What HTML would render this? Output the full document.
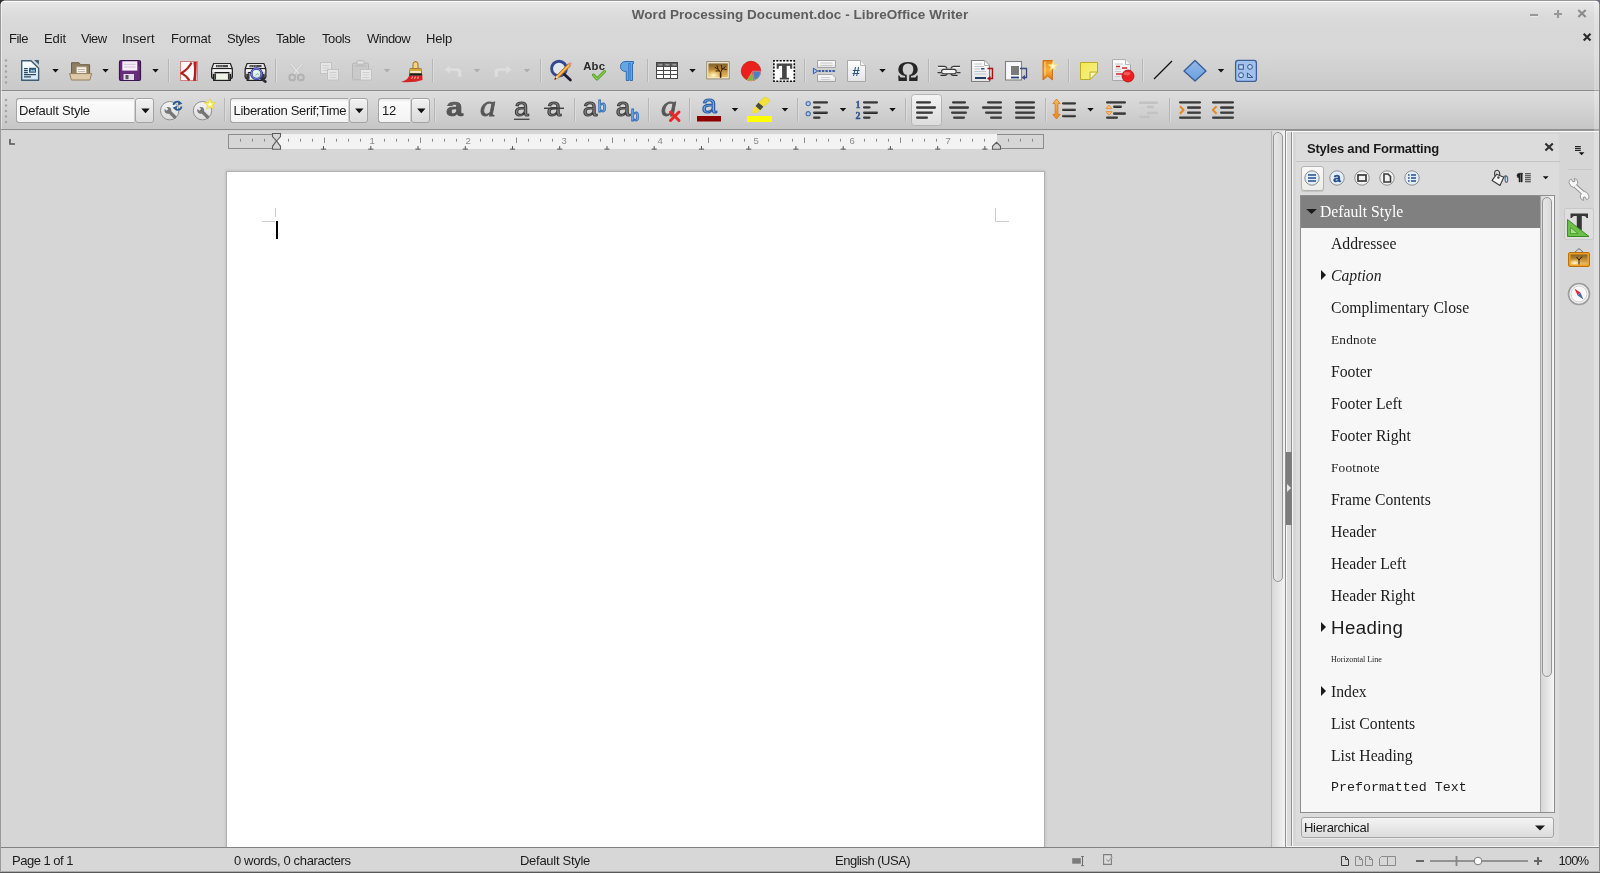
<!DOCTYPE html>
<html><head><meta charset="utf-8"><title>Word Processing Document.doc - LibreOffice Writer</title>
<style>
*{box-sizing:border-box;margin:0;padding:0}
html,body{width:1600px;height:873px;overflow:hidden}
body{background:#d6d6d6;font-family:"Liberation Sans",sans-serif;font-size:13px;color:#1c1c1c;position:relative}
.a{position:absolute}
.t{position:absolute;white-space:nowrap;line-height:16px;height:16px}
.ser{font-family:"Liberation Serif",serif}
.mono{font-family:"Liberation Mono",monospace}
#ov{position:absolute;left:0;top:0;width:1600px;height:873px;overflow:hidden}
.cbf{position:absolute;background:linear-gradient(#e9e9e9 0,#fbfbfb 3px,#f3f3f3 100%);border:1px solid #a4a4a4;border-right:none;border-radius:3px 0 0 3px}
.cbb{position:absolute;background:linear-gradient(#f2f2f2,#dadada);border:1px solid #a4a4a4;border-radius:3px;box-shadow:inset 0 1px 0 #fafafa}
.li{position:absolute;white-space:nowrap;color:#1c1c1c;font-family:"Liberation Serif",serif;font-size:15.7px;line-height:32px;height:32px;left:1331px}
</style></head>
<body>
<div id="root" style="position:absolute;left:0;top:0;width:1600px;height:873px;will-change:transform">
<div class="a" style="left:0;top:0;width:1600px;height:90px;background:linear-gradient(#979797 0,#979797 1px,#fbfbfb 1px,#fbfbfb 2px,#e7e7e7 2px,#e0e0e0 9px,#dadada 18px,#d8d8d8 28px,#d7d7d7 52px,#c9c9c9 90px)"></div>
<div class="a" style="left:0;top:90px;width:1600px;height:1px;background:#8c8c8c"></div>
<div class="a" style="left:0;top:91px;width:1600px;height:38px;background:linear-gradient(#dedede,#c6c6c6)"></div>
<div class="a" style="left:0;top:129px;width:1600px;height:1px;background:#909090"></div>
<div class="a" style="left:0;top:130px;width:1600px;height:1px;background:#d2d2d2"></div><div class="a" style="left:1285px;top:130px;width:314px;height:1px;background:#969696"></div>
<div class="a" style="left:0;top:0;width:1px;height:873px;background:#9a9a9a"></div>
<div class="a" style="left:1px;top:2px;width:1px;height:127px;background:rgba(255,255,255,.45)"></div>
<div class="a" style="left:1599px;top:0;width:1px;height:873px;background:#8a8a8a"></div>
<div class="a" style="left:1594px;top:1px;width:5px;height:872px;background:rgba(255,255,255,.22)"></div>
<div class="t" style="left:0px;top:7px;width:1600px;text-align:center;font-weight:bold;font-size:13.5px;color:#5e5e5e;letter-spacing:.05px">Word Processing Document.doc - LibreOffice Writer</div>
<div class="t" style="left:9px;top:31px;letter-spacing:-0.5px">File</div>
<div class="t" style="left:44px;top:31px;letter-spacing:-0.1px">Edit</div>
<div class="t" style="left:81px;top:31px;letter-spacing:-0.6px">View</div>
<div class="t" style="left:122px;top:31px;letter-spacing:0px">Insert</div>
<div class="t" style="left:171px;top:31px;letter-spacing:-0.2px">Format</div>
<div class="t" style="left:227px;top:31px;letter-spacing:-0.5px">Styles</div>
<div class="t" style="left:276px;top:31px;letter-spacing:-0.4px">Table</div>
<div class="t" style="left:322px;top:31px;letter-spacing:-0.4px">Tools</div>
<div class="t" style="left:367px;top:31px;letter-spacing:-0.5px">Window</div>
<div class="t" style="left:426px;top:31px;letter-spacing:-0.2px">Help</div>
<div class="cbf" style="left:16px;top:98px;width:118px;height:25px"></div><div class="cbb" style="left:135px;top:98px;width:19px;height:25px"></div><div class="t" style="left:19px;top:103px;letter-spacing:-0.22px;">Default Style</div>
<div class="cbf" style="left:230px;top:98px;width:118px;height:25px"></div><div class="cbb" style="left:349px;top:98px;width:19px;height:25px"></div><div class="t" style="left:233.5px;top:103px;letter-spacing:-0.32px;width:113.5px;overflow:hidden;">Liberation Serif;Time</div>
<div class="cbf" style="left:378px;top:98px;width:32px;height:25px"></div><div class="cbb" style="left:411px;top:98px;width:19px;height:25px"></div><div class="t" style="left:382px;top:103px;letter-spacing:-0.3px;">12</div>
<div class="a" style="left:277px;top:134px;width:720px;height:15px;background:#f3f3f3"></div>
<div class="a" style="left:228px;top:134px;width:49px;height:15px;background:#d6d6d6;border:1px solid #8c8c8c;border-right:none"></div>
<div class="a" style="left:997px;top:134px;width:47px;height:15px;background:#d6d6d6;border:1px solid #8c8c8c;border-left:none"></div>
<div class="a" style="left:226px;top:171px;width:819px;height:677px;background:#fff;border:1px solid #b0b0b0;border-bottom:none;box-shadow:0 0 3px rgba(0,0,0,.16)"></div>
<div class="a" style="left:1271px;top:131px;width:14px;height:716px;background:linear-gradient(90deg,#b4b4b4 0,#b4b4b4 1px,#d8d8d8 1px,#e4e4e4 7px,#f4f4f4 14px)"></div>
<div class="a" style="left:1273px;top:132px;width:10px;height:450px;border:1px solid #969696;border-radius:5px;background:linear-gradient(90deg,#e6e6e6,#dadada)"></div>
<div class="a" style="left:1285px;top:131px;width:1px;height:716px;background:#8e8e8e"></div>
<div class="a" style="left:1286px;top:131px;width:1px;height:716px;background:#f8f8f8"></div>
<div class="a" style="left:1287px;top:131px;width:4px;height:716px;background:#dcdcdc"></div>
<div class="a" style="left:1291px;top:131px;width:1px;height:716px;background:#8e8e8e"></div>
<div class="a" style="left:1292px;top:131px;width:1px;height:716px;background:#f8f8f8"></div>
<div class="a" style="left:1286px;top:452px;width:6px;height:73px;background:#7c7c7c"></div>
<div class="a" style="left:1287px;top:484px;width:0;height:0;border-left:4px solid #e8e8e8;border-top:4px solid transparent;border-bottom:4px solid transparent"></div>
<div class="a" style="left:1286px;top:131px;width:313px;height:1px;background:#fafafa"></div>
<div class="a" style="left:1296px;top:134px;width:263px;height:708px;background:#dcdcdc"></div>
<div class="a" style="left:1296px;top:161px;width:264px;height:1px;background:#c4c4c4"></div>
<div class="t" style="left:1307px;top:141px;font-weight:bold;letter-spacing:-0.22px;color:#1a1a1a">Styles and Formatting</div>
<div class="a" style="left:1301px;top:166px;width:23px;height:25px;background:linear-gradient(#f8f8f6,#ecece9);border:1px solid #b4b4b4;border-radius:3px;box-shadow:0 1px 1px rgba(0,0,0,.12)"></div>
<div class="a" style="left:1300px;top:195px;width:255px;height:618px;background:#f7f7f7;border:1px solid #8e8e8e"></div>
<div class="a" style="left:1301px;top:196px;width:239px;height:32px;background:#808080"></div>
<div class="a" style="left:1540px;top:196px;width:14px;height:616px;background:linear-gradient(90deg,#a8a8a8 0,#a8a8a8 1px,#d6d6d6 1px,#e4e4e4 7px,#f6f6f6 14px)"></div>
<div class="a" style="left:1542px;top:197px;width:10px;height:480px;border:1px solid #969696;border-radius:5px;background:linear-gradient(90deg,#e6e6e6,#dadada)"></div>
<div class="li" style="top:196px;color:#fff;left:1320px">Default Style</div>
<div class="li" style="top:228px;">Addressee</div>
<div class="li" style="top:260px;font-style:italic">Caption</div>
<div class="li" style="top:292px;">Complimentary Close</div>
<div class="li" style="top:324px;font-size:13.3px;letter-spacing:.2px">Endnote</div>
<div class="li" style="top:356px;">Footer</div>
<div class="li" style="top:388px;">Footer Left</div>
<div class="li" style="top:420px;">Footer Right</div>
<div class="li" style="top:452px;font-size:13.3px;letter-spacing:.2px">Footnote</div>
<div class="li" style="top:484px;">Frame Contents</div>
<div class="li" style="top:516px;">Header</div>
<div class="li" style="top:548px;">Header Left</div>
<div class="li" style="top:580px;">Header Right</div>
<div class="li" style="top:612px;font-family:'Liberation Sans',sans-serif;font-size:18.7px;letter-spacing:.4px">Heading</div>
<div class="li" style="top:644px;font-size:8px">Horizontal Line</div>
<div class="li" style="top:676px;">Index</div>
<div class="li" style="top:708px;">List Contents</div>
<div class="li" style="top:740px;">List Heading</div>
<div class="li" style="top:772px;font-family:'Liberation Mono',monospace;font-size:13.3px">Preformatted Text</div>
<div class="a" style="left:1301px;top:817px;width:253px;height:21px;background:linear-gradient(#f4f4f4,#dcdcdc);border:1px solid #a6a6a6;border-radius:3px;box-shadow:0 1px 0 #eaeaea"></div>
<div class="t" style="left:1304px;top:820px;letter-spacing:-0.3px">Hierarchical</div>
<div class="a" style="left:1564px;top:208px;width:30px;height:32px;background:#dedede;border:1px solid #c8c8c8;border-radius:2px"></div>
<div class="a" style="left:1568px;top:169px;width:24px;height:1px;background:#c8c8c8"></div>
<div class="a" style="left:1286px;top:846px;width:313px;height:1px;background:#f4f4f4"></div>
<div class="a" style="left:1px;top:847px;width:1598px;height:26px;background:#d7d7d7;border-top:1px solid #828282"></div>
<div class="a" style="left:0;top:871px;width:1600px;height:1px;background:#adadad"></div><div class="a" style="left:0;top:872px;width:1600px;height:1px;background:#585858"></div>
<div class="t" style="left:12px;top:853px;letter-spacing:-0.5px;color:#1c1c1c">Page 1 of 1</div>
<div class="t" style="left:234px;top:853px;letter-spacing:-0.36px;color:#1c1c1c">0 words, 0 characters</div>
<div class="t" style="left:520px;top:853px;letter-spacing:-0.28px;color:#1c1c1c">Default Style</div>
<div class="t" style="left:835px;top:853px;letter-spacing:-0.5px;color:#1c1c1c">English (USA)</div>
<div class="t" style="left:1558.5px;top:853px;letter-spacing:-0.9px;color:#1c1c1c">100%</div>
<svg id="ov" width="1600" height="873" viewBox="0 0 1600 873">
<defs>
<linearGradient id="gdoc" x1="0" y1="0" x2="0" y2="1"><stop offset="0" stop-color="#ffffff"/><stop offset="1" stop-color="#d4e8f6"/></linearGradient>
<linearGradient id="gpaper" x1="0" y1="0" x2="0" y2="1"><stop offset="0" stop-color="#ffffff"/><stop offset="1" stop-color="#e4e4e8"/></linearGradient>
<linearGradient id="gimg" x1="0" y1="0" x2="0" y2="1"><stop offset="0" stop-color="#806028"/><stop offset=".5" stop-color="#c08c34"/><stop offset="1" stop-color="#ecc060"/></linearGradient>
<radialGradient id="gsun" cx=".26" cy=".85" r=".45"><stop offset="0" stop-color="#fffad8"/><stop offset="1" stop-color="#f4d070" stop-opacity="0"/></radialGradient>
<linearGradient id="gnote" x1="0" y1="0" x2="1" y2="1"><stop offset="0" stop-color="#f2e850"/><stop offset="1" stop-color="#f8f090"/></linearGradient>
<linearGradient id="gbook" x1="0" y1="0" x2="0" y2="1"><stop offset="0" stop-color="#e88818"/><stop offset=".5" stop-color="#f8b040"/><stop offset="1" stop-color="#e07810"/></linearGradient>
<linearGradient id="gdia" x1="0" y1="0" x2="0" y2="1"><stop offset="0" stop-color="#94baea"/><stop offset="1" stop-color="#6a9ede"/></linearGradient>
<linearGradient id="gbar" x1="0" y1="0" x2="0" y2="1"><stop offset="0" stop-color="#7a7a7a"/><stop offset=".5" stop-color="#3c3c3c"/><stop offset="1" stop-color="#222"/></linearGradient>
<linearGradient id="gprn" x1="0" y1="0" x2="0" y2="1"><stop offset="0" stop-color="#f4f4f4"/><stop offset=".4" stop-color="#d4d4d4"/><stop offset="1" stop-color="#7c7c7c"/></linearGradient>
<linearGradient id="gwr" x1="0" y1="0" x2="0" y2="1"><stop offset="0" stop-color="#f4f4f4"/><stop offset="1" stop-color="#dcdcdc"/></linearGradient>
<linearGradient id="gora" x1="0" y1="0" x2="0" y2="1"><stop offset="0" stop-color="#f8b860"/><stop offset="1" stop-color="#e88820"/></linearGradient>
<linearGradient id="ggray" x1="0" y1="0" x2="0" y2="1"><stop offset="0" stop-color="#6e6e6e"/><stop offset="1" stop-color="#484848"/></linearGradient>
</defs>
<path d="M240.5,138.8V141.6" stroke="#868686" stroke-width="1"/>
<path d="M252.5,138.8V141.6" stroke="#868686" stroke-width="1"/>
<path d="M264.5,138.8V141.6" stroke="#868686" stroke-width="1"/>
<path d="M288.5,138.8V141.6" stroke="#868686" stroke-width="1"/>
<path d="M300.5,138.8V141.6" stroke="#868686" stroke-width="1"/>
<path d="M312.5,138.8V141.6" stroke="#868686" stroke-width="1"/>
<path d="M324.5,137.5V143" stroke="#8a8a8a" stroke-width="1"/>
<path d="M336.5,138.8V141.6" stroke="#868686" stroke-width="1"/>
<path d="M348.5,138.8V141.6" stroke="#868686" stroke-width="1"/>
<path d="M360.5,138.8V141.6" stroke="#868686" stroke-width="1"/>
<text x="372.2" y="143.8" font-size="9.5" fill="#8a8a8a" text-anchor="middle" font-family="Liberation Sans">1</text>
<path d="M384.5,138.8V141.6" stroke="#868686" stroke-width="1"/>
<path d="M396.5,138.8V141.6" stroke="#868686" stroke-width="1"/>
<path d="M408.5,138.8V141.6" stroke="#868686" stroke-width="1"/>
<path d="M420.5,137.5V143" stroke="#8a8a8a" stroke-width="1"/>
<path d="M432.5,138.8V141.6" stroke="#868686" stroke-width="1"/>
<path d="M444.5,138.8V141.6" stroke="#868686" stroke-width="1"/>
<path d="M456.5,138.8V141.6" stroke="#868686" stroke-width="1"/>
<text x="468.2" y="143.8" font-size="9.5" fill="#8a8a8a" text-anchor="middle" font-family="Liberation Sans">2</text>
<path d="M480.5,138.8V141.6" stroke="#868686" stroke-width="1"/>
<path d="M492.5,138.8V141.6" stroke="#868686" stroke-width="1"/>
<path d="M504.5,138.8V141.6" stroke="#868686" stroke-width="1"/>
<path d="M516.5,137.5V143" stroke="#8a8a8a" stroke-width="1"/>
<path d="M528.5,138.8V141.6" stroke="#868686" stroke-width="1"/>
<path d="M540.5,138.8V141.6" stroke="#868686" stroke-width="1"/>
<path d="M552.5,138.8V141.6" stroke="#868686" stroke-width="1"/>
<text x="564.2" y="143.8" font-size="9.5" fill="#8a8a8a" text-anchor="middle" font-family="Liberation Sans">3</text>
<path d="M576.5,138.8V141.6" stroke="#868686" stroke-width="1"/>
<path d="M588.5,138.8V141.6" stroke="#868686" stroke-width="1"/>
<path d="M600.5,138.8V141.6" stroke="#868686" stroke-width="1"/>
<path d="M612.5,137.5V143" stroke="#8a8a8a" stroke-width="1"/>
<path d="M624.5,138.8V141.6" stroke="#868686" stroke-width="1"/>
<path d="M636.5,138.8V141.6" stroke="#868686" stroke-width="1"/>
<path d="M648.5,138.8V141.6" stroke="#868686" stroke-width="1"/>
<text x="660.2" y="143.8" font-size="9.5" fill="#8a8a8a" text-anchor="middle" font-family="Liberation Sans">4</text>
<path d="M672.5,138.8V141.6" stroke="#868686" stroke-width="1"/>
<path d="M684.5,138.8V141.6" stroke="#868686" stroke-width="1"/>
<path d="M696.5,138.8V141.6" stroke="#868686" stroke-width="1"/>
<path d="M708.5,137.5V143" stroke="#8a8a8a" stroke-width="1"/>
<path d="M720.5,138.8V141.6" stroke="#868686" stroke-width="1"/>
<path d="M732.5,138.8V141.6" stroke="#868686" stroke-width="1"/>
<path d="M744.5,138.8V141.6" stroke="#868686" stroke-width="1"/>
<text x="756.2" y="143.8" font-size="9.5" fill="#8a8a8a" text-anchor="middle" font-family="Liberation Sans">5</text>
<path d="M768.5,138.8V141.6" stroke="#868686" stroke-width="1"/>
<path d="M780.5,138.8V141.6" stroke="#868686" stroke-width="1"/>
<path d="M792.5,138.8V141.6" stroke="#868686" stroke-width="1"/>
<path d="M804.5,137.5V143" stroke="#8a8a8a" stroke-width="1"/>
<path d="M816.5,138.8V141.6" stroke="#868686" stroke-width="1"/>
<path d="M828.5,138.8V141.6" stroke="#868686" stroke-width="1"/>
<path d="M840.5,138.8V141.6" stroke="#868686" stroke-width="1"/>
<text x="852.2" y="143.8" font-size="9.5" fill="#8a8a8a" text-anchor="middle" font-family="Liberation Sans">6</text>
<path d="M864.5,138.8V141.6" stroke="#868686" stroke-width="1"/>
<path d="M876.5,138.8V141.6" stroke="#868686" stroke-width="1"/>
<path d="M888.5,138.8V141.6" stroke="#868686" stroke-width="1"/>
<path d="M900.5,137.5V143" stroke="#8a8a8a" stroke-width="1"/>
<path d="M912.5,138.8V141.6" stroke="#868686" stroke-width="1"/>
<path d="M924.5,138.8V141.6" stroke="#868686" stroke-width="1"/>
<path d="M936.5,138.8V141.6" stroke="#868686" stroke-width="1"/>
<text x="948.2" y="143.8" font-size="9.5" fill="#8a8a8a" text-anchor="middle" font-family="Liberation Sans">7</text>
<path d="M960.5,138.8V141.6" stroke="#868686" stroke-width="1"/>
<path d="M972.5,138.8V141.6" stroke="#868686" stroke-width="1"/>
<path d="M984.5,138.8V141.6" stroke="#868686" stroke-width="1"/>
<path d="M1008.5,138.8V141.6" stroke="#868686" stroke-width="1"/>
<path d="M1020.5,138.8V141.6" stroke="#868686" stroke-width="1"/>
<path d="M1032.5,138.8V141.6" stroke="#868686" stroke-width="1"/>
<path d="M323.5,146V149.4M320.9,149.1H326.1" stroke="#555" stroke-width="1" fill="none"/>
<path d="M370.8,146V149.4M368.2,149.1H373.40000000000003" stroke="#555" stroke-width="1" fill="none"/>
<path d="M418.0,146V149.4M415.4,149.1H420.6" stroke="#555" stroke-width="1" fill="none"/>
<path d="M465.3,146V149.4M462.7,149.1H467.90000000000003" stroke="#555" stroke-width="1" fill="none"/>
<path d="M512.5,146V149.4M509.9,149.1H515.1" stroke="#555" stroke-width="1" fill="none"/>
<path d="M559.7,146V149.4M557.1,149.1H562.3000000000001" stroke="#555" stroke-width="1" fill="none"/>
<path d="M607.0,146V149.4M604.4,149.1H609.6" stroke="#555" stroke-width="1" fill="none"/>
<path d="M654.2,146V149.4M651.6,149.1H656.8000000000001" stroke="#555" stroke-width="1" fill="none"/>
<path d="M701.5,146V149.4M698.9,149.1H704.1" stroke="#555" stroke-width="1" fill="none"/>
<path d="M748.7,146V149.4M746.1,149.1H751.3000000000001" stroke="#555" stroke-width="1" fill="none"/>
<path d="M795.9,146V149.4M793.3,149.1H798.5" stroke="#555" stroke-width="1" fill="none"/>
<path d="M843.2,146V149.4M840.6,149.1H845.8000000000001" stroke="#555" stroke-width="1" fill="none"/>
<path d="M890.4,146V149.4M887.8,149.1H893.0" stroke="#555" stroke-width="1" fill="none"/>
<path d="M937.7,146V149.4M935.1,149.1H940.3000000000001" stroke="#555" stroke-width="1" fill="none"/>
<path d="M984.9,146V149.4M982.3,149.1H987.5" stroke="#555" stroke-width="1" fill="none"/>
<path d="M272.5,133.5H280.5V136.5L276.5,141L272.5,136.5Z" fill="#d6d6d6" stroke="#5c5c5c" stroke-width="1.1" stroke-linejoin="miter"/>
<path d="M272.5,149.3H280.5V146.3L276.5,141L272.5,146.3Z" fill="#d6d6d6" stroke="#5c5c5c" stroke-width="1.1"/>
<path d="M992.5,149.3H1000.5V146.3L996.5,142.3L992.5,146.3Z" fill="#d6d6d6" stroke="#5c5c5c" stroke-width="1.1"/>
<path d="M10,139V144H15" stroke="#555" stroke-width="1.6" fill="none"/>
<path d="M275.5,208V217M262,221.5H275" stroke="#cccccc" stroke-width="1" fill="none"/>
<path d="M995.5,208V221.5H1009" stroke="#cccccc" stroke-width="1" fill="none"/>
<rect x="276" y="221" width="2" height="18" fill="#000"/>
<circle cx="6" cy="60.5" r="1.25" fill="#a4a4a4"/><circle cx="6" cy="66" r="1.25" fill="#a4a4a4"/><circle cx="6" cy="71.5" r="1.25" fill="#a4a4a4"/><circle cx="6" cy="77" r="1.25" fill="#a4a4a4"/><circle cx="6" cy="82.5" r="1.25" fill="#a4a4a4"/>
<path d="M21.7,60.7H31L38.6,68.3V80.3H21.7Z" fill="url(#gdoc)" stroke="#3e5c72" stroke-width="1.4" stroke-linejoin="round"/>
<path d="M34.2,60H38.9V64.7Z" fill="#3a6078"/>
<path d="M24,68.6H27.8M24,70.6H27.8M24,72.6H27.8M24,74.7H36M24,76.8H31" stroke="#2a4a64" stroke-width="1.2"/>
<rect x="29" y="67.8" width="7" height="4.9" fill="#2e5a7c"/><path d="M30,71.6L31.6,69.6L32.8,70.8L34,69.2L35.2,71.6Z" fill="#b8d4e8"/>
<path d="M52.3,69H58.7L55.5,72.4Z" fill="#111"/>
<path d="M71.5,62.7H79L80.6,64.7H89.6V78H71.5Z" fill="#8e7e64" stroke="#6e5e46" stroke-width="1"/>
<rect x="76.3" y="66.8" width="10.4" height="8" fill="#f6f2e8" stroke="#a89878" stroke-width=".8"/><path d="M78,69.5H85M78,71.6H85" stroke="#bcb8ac" stroke-width="1"/>
<path d="M69.6,73.6H91.6L89.8,80H71.4Z" fill="#dccaa8" stroke="#96805a" stroke-width="1" stroke-linejoin="round"/>
<path d="M102.3,69H108.7L105.5,72.4Z" fill="#111"/>
<rect x="119.5" y="60.5" width="21" height="20" rx="1.5" fill="#682c7c" stroke="#381450" stroke-width="1.2"/>
<rect x="122.3" y="61.3" width="15" height="9.3" fill="#f6eef8"/><path d="M124,64.3H135.6M124,67H135.6" stroke="#d0c0d8" stroke-width="1"/>
<rect x="123.5" y="74" width="10.5" height="6" fill="#e2dce6"/><rect x="125.5" y="75" width="3" height="4.2" fill="#5a5060"/>
<path d="M138.5,62V66" stroke="#4c1c5c" stroke-width="1"/>
<path d="M152.3,69H158.7L155.5,72.4Z" fill="#111"/>
<path d="M168.5,59V82" stroke="#b6b6b6" stroke-width="1"/><path d="M169.5,59V82" stroke="#dcdcdc" stroke-width="1"/>
<rect x="180.5" y="61.5" width="17" height="19" fill="#fdfdfd" stroke="#d07878" stroke-width=".9"/>
<path d="M193.4,62H196.8L196.2,80.8H193Q194.8,72 193.4,62Z" fill="#b42020"/>
<path d="M191.6,62.5Q188,69.5 181.2,73.2Q186.6,75.4 189.2,80.6" fill="none" stroke="#b42020" stroke-width="2.2" stroke-linejoin="round"/>
<path d="M213.6,63.5H230.4L232.4,69H211.6Z" fill="#e6e6e6" stroke="#262626" stroke-width="1.2" stroke-linejoin="round"/><rect x="216" y="65" width="12" height="2.2" fill="#484848"/><path d="M217,66.1H224" stroke="#b0b0b0" stroke-width="1" stroke-dasharray="1.2,1.2"/><rect x="211.6" y="68.6" width="20.8" height="9.8" rx="1.6" fill="url(#gprn)" stroke="#222" stroke-width="1.2"/><rect x="212.6" y="69.4" width="18.8" height="2.2" fill="#f8f8f8"/><rect x="214.6" y="72" width="14.8" height="1.7" fill="#141414"/><path d="M213.6,74V80.3H230.4V74" fill="#8c8c8c" stroke="#1e1e1e" stroke-width="1.3" stroke-linejoin="round"/><rect x="215.9" y="73.7" width="12.2" height="6" fill="#f0f4e8" stroke="#c4c8bc" stroke-width=".6"/><path d="M215.3,74V79.6M228.7,74V79.6" stroke="#1e1e1e" stroke-width="1.1"/>
<path d="M247.1,63.5H263.9L265.9,69H245.1Z" fill="#e6e6e6" stroke="#262626" stroke-width="1.2" stroke-linejoin="round"/><rect x="249.5" y="65" width="12" height="2.2" fill="#484848"/><path d="M250.5,66.1H257.5" stroke="#b0b0b0" stroke-width="1" stroke-dasharray="1.2,1.2"/><rect x="245.1" y="68.6" width="20.8" height="9.8" rx="1.6" fill="url(#gprn)" stroke="#222" stroke-width="1.2"/><rect x="246.1" y="69.4" width="18.8" height="2.2" fill="#f8f8f8"/><rect x="248.1" y="72" width="14.8" height="1.7" fill="#141414"/><path d="M247.1,74V80.3H263.9V74" fill="#8c8c8c" stroke="#1e1e1e" stroke-width="1.3" stroke-linejoin="round"/><rect x="249.4" y="73.7" width="12.2" height="6" fill="#f0f4e8" stroke="#c4c8bc" stroke-width=".6"/><path d="M248.8,74V79.6M262.2,74V79.6" stroke="#1e1e1e" stroke-width="1.1"/>
<path d="M260.6,78L265.4,81.6" stroke="#2e2e34" stroke-width="2.6" stroke-linecap="round"/><circle cx="256.5" cy="73.7" r="5.2" fill="#dcefe6" stroke="#343c9e" stroke-width="2.5"/><circle cx="256.5" cy="73.7" r="5.2" fill="none" stroke="#8a92d4" stroke-width=".8"/>
<path d="M254.6,72.4A2.6,2.6 0 0 1 258.6,72.8" stroke="#fff" stroke-width="1" fill="none"/><path d="M255.6,75.6L257.6,73.6L258.6,75.2" stroke="#7cc08a" stroke-width="1" fill="none"/>
<path d="M275.5,59V82" stroke="#b6b6b6" stroke-width="1"/><path d="M276.5,59V82" stroke="#dcdcdc" stroke-width="1"/>
<path d="M290.6,63.6L299.6,74.6M302.4,63.6L293.4,74.6" stroke="#c2c2c2" stroke-width="3" fill="none"/><path d="M290.6,63.6L299.6,74.6M302.4,63.6L293.4,74.6" stroke="#e2e2e2" stroke-width="1.6" fill="none"/>
<circle cx="292.2" cy="77.4" r="2.9" fill="none" stroke="#b2b2b2" stroke-width="2"/><circle cx="300.8" cy="77.4" r="2.9" fill="none" stroke="#b2b2b2" stroke-width="2"/>
<rect x="320.5" y="62.5" width="11" height="11" fill="#e6e6e6" stroke="#c2c2c2"/><path d="M322.5,65.5H329.5M322.5,68H329.5M322.5,70.5H329.5" stroke="#cfcfcf" stroke-width="1"/>
<rect x="327.5" y="69.5" width="11" height="10.5" fill="#e6e6e6" stroke="#c2c2c2"/><path d="M329.5,72.5H336.5M329.5,75H336.5M329.5,77.5H336.5" stroke="#cfcfcf" stroke-width="1"/>
<rect x="352.5" y="63.2" width="16" height="16.6" rx="1" fill="#cacaca" stroke="#b6b6b6"/><rect x="356.8" y="60.8" width="7.4" height="3.4" rx="1" fill="#e2e2e2" stroke="#b6b6b6"/><path d="M355,66H366" stroke="#b6b6b6" stroke-width="1"/>
<rect x="360.5" y="69.5" width="11" height="10.5" fill="#e8e8e8" stroke="#c2c2c2"/><path d="M362.5,72.5H369.5M362.5,75H369.5M362.5,77.5H369.5" stroke="#cfcfcf" stroke-width="1"/>
<path d="M383.8,69H390.2L387,72.4Z" fill="#adadad"/>
<path d="M413.2,63Q415.5,60.2 417.8,63L418.2,68.6H412.8Z" fill="#f0d488" stroke="#a87828" stroke-width="1.1"/>
<path d="M410,68.6H421.2L421.6,73.5H409.6Z" fill="#f0e8c8" stroke="#8a6818" stroke-width=".8"/><path d="M410.2,69H421L421.2,71H410Z" fill="#d8a838"/>
<path d="M409.5,73.5H422L422.3,75.8H409Z" fill="#1a1a1a"/>
<path d="M409,75.8H422.3L422.5,80Q414,83 401,82Q408,80 409,75.8Z" fill="#d42424"/>
<path d="M412.6,76.6L411.6,78.8M415.4,76.6L414.6,78.8M418.2,76.6L417.8,78.8" stroke="#f8c8c8" stroke-width="1"/>
<path d="M432.5,59V82" stroke="#b6b6b6" stroke-width="1"/><path d="M433.5,59V82" stroke="#dcdcdc" stroke-width="1"/>
<path d="M461.5,77V71.5Q461.5,68 457,68H450V65L444,69.5L450,74V71H456.5Q458,71 458,73V77Z" fill="#dedede" stroke="#d0d0d0" stroke-width=".6"/>
<path d="M473.8,69H480.2L477,72.4Z" fill="#adadad"/>
<path d="M494.5,77V71.5Q494.5,68 499,68H506V65L512,69.5L506,74V71H499.5Q498,71 498,73V77Z" fill="#dedede" stroke="#d0d0d0" stroke-width=".6"/>
<path d="M523.8,69H530.2L527,72.4Z" fill="#adadad"/>
<path d="M540.5,59V82" stroke="#b6b6b6" stroke-width="1"/><path d="M541.5,59V82" stroke="#dcdcdc" stroke-width="1"/>
<circle cx="559" cy="68.6" r="7.4" fill="#e8eef8" fill-opacity=".7" stroke="#344890" stroke-width="2.9"/>
<path d="M564.5,74.5L570.4,80" stroke="#1c1c30" stroke-width="2.8" stroke-linecap="round"/>
<path d="M554.6,79.6L556.2,75.8L568.4,63.6L570.6,65.8L558.4,78Z" fill="#eea030" stroke="#a86410" stroke-width=".7"/><path d="M557.2,77L569.4,64.8" stroke="#f8d090" stroke-width=".9"/><path d="M568.4,63.6L569.6,62.4Q571,61.6 571.8,63.2L570.6,65.8Z" fill="#e89090"/><path d="M554.6,79.6L555.4,77.6L556.8,78.8Z" fill="#222"/><path d="M556.2,75.8L558.4,78L554.6,79.6Z" fill="#f4d8a8"/><path d="M554.6,79.6L555.4,77.6L556.6,78.8Z" fill="#222"/>
<text x="583.3" y="69.9" font-family="Liberation Sans" font-weight="bold" font-size="11.3" fill="#2a2a2a" letter-spacing=".15">Abc</text>
<path d="M593.5,75L597,79L604.5,71.5" fill="none" stroke="#4e9a1e" stroke-width="3" stroke-linecap="round" stroke-linejoin="round"/><path d="M593.5,75L597,79L604.5,71.5" fill="none" stroke="#8ad04a" stroke-width="1.2" stroke-linecap="round" stroke-linejoin="round"/>
<path d="M626,61.5H633.5V63.5H632.5V80.5H630V63.5H628.8V80.5H626.3V71.5Q620.5,71.5 620.5,66.5Q620.5,61.5 626,61.5Z" fill="#62a8e6" stroke="#2e6cb4" stroke-width="1" stroke-linejoin="round"/>
<path d="M647.5,59V82" stroke="#b6b6b6" stroke-width="1"/><path d="M648.5,59V82" stroke="#dcdcdc" stroke-width="1"/>
<rect x="656.5" y="62.5" width="21" height="16" fill="#fff" stroke="#444"/><rect x="657" y="63" width="20" height="3.6" fill="#606060"/><path d="M658.4,64.8H662.4M665.4,64.8H669.4M672.4,64.8H676.4" stroke="#9a9a9a" stroke-width="1.6"/>
<path d="M663.5,62.5V78.5M670.5,62.5V78.5M656.5,66.5H677.5M656.5,70.5H677.5M656.5,74.5H677.5" stroke="#4a4a4a" stroke-width="1" fill="none"/>
<path d="M689.3,69H695.7L692.5,72.4Z" fill="#111"/>
<rect x="706.8" y="61.7" width="22.4" height="17.2" fill="#fbf6ea" stroke="#8e7e5e" stroke-width=".9"/><rect x="708.4" y="63.4" width="19.4" height="14" fill="url(#gimg)"/><rect x="708.4" y="63.4" width="19.4" height="14" fill="url(#gsun)"/>
<path d="M720.6,77.4V72.6L718,69L715,67.4M718,69L717,65.6M720.6,72.6L722,69.4L725.4,66.6M722,69.4L721.4,65.2M722.6,68.6L726.4,69.6M719.4,70.8L716,71" stroke="#382008" stroke-width="1" fill="none" stroke-linecap="round"/><path d="M720.6,77.4V72.8" stroke="#382008" stroke-width="1.6"/>
<circle cx="751" cy="71" r="9.7" fill="#ea201c" stroke="#c01a18" stroke-width=".8"/>
<path d="M752.6,71.2H760.7A9.8,9.8 0 0 1 754.4,80.2Z" fill="#4a80c4" stroke="#f4b4a8" stroke-width=".5"/><path d="M751.8,72.4L753.4,80.5A9.8,9.8 0 0 1 747.2,80Z" fill="#74bc40" stroke="#f4c4a8" stroke-width=".4"/>
<rect x="773.9" y="60.8" width="20.4" height="20.4" fill="#fdfdfd" stroke="#0a0a0a" stroke-width="1.6" stroke-dasharray="2,1.4" stroke-dashoffset="1"/>
<text x="784.3" y="79" font-family="Liberation Serif" font-weight="bold" font-size="23" fill="#444" stroke="#444" stroke-width=".9" text-anchor="middle">T</text>
<path d="M804.5,59V82" stroke="#b6b6b6" stroke-width="1"/><path d="M805.5,59V82" stroke="#dcdcdc" stroke-width="1"/>
<path d="M817.5,67.5V60.5H835.5V67.5Z" fill="url(#gpaper)" stroke="#a4a4a4" stroke-width="1"/><path d="M820.5,63H832.5M820.5,65.5H832.5" stroke="#c8c8c8" stroke-width="1"/>
<path d="M817.5,74.6V81.5H835.5V77.8L832.3,74.6Z" fill="url(#gpaper)" stroke="#a4a4a4" stroke-width="1"/><path d="M821,77.5H830M821,79.5H830" stroke="#cfcfcf" stroke-width="1"/>
<path d="M818.4,71H836" stroke="#3a5ca0" stroke-width="2" stroke-dasharray="2.4,1.1"/><path d="M813.4,68.2L817.8,71L813.4,73.8Z" fill="#a8c4ec" stroke="#3a5ca0" stroke-width="1"/>
<path d="M847.5,60.5H860.5L865.5,65.5V81.5H847.5Z" fill="url(#gpaper)" stroke="#a8a8a8" stroke-width="1"/><path d="M860.5,60.5V65.5H865.5" fill="#f4f4f4" stroke="#b4b4b4" stroke-width="1"/>
<text x="856" y="76.3" font-family="Liberation Sans" font-weight="bold" font-size="13.6" fill="#2a5688" text-anchor="middle">#</text>
<path d="M879.3,69H885.7L882.5,72.4Z" fill="#111"/>
<text x="908" y="80.5" font-family="Liberation Serif" font-weight="bold" font-size="29" fill="#262626" text-anchor="middle" textLength="22" lengthAdjust="spacingAndGlyphs">Ω</text>
<path d="M928.5,59V82" stroke="#b6b6b6" stroke-width="1"/><path d="M929.5,59V82" stroke="#dcdcdc" stroke-width="1"/>
<path d="M938,67.6H945.5M952.5,67.6H960" stroke="#f2f2f2" stroke-width="1.8"/>
<path d="M938,66.4H944.5Q946.5,66.6 947.2,68.6M960,66.4H953.5Q951.5,66.6 950.8,68.6" fill="none" stroke="#3a3a3a" stroke-width="1.1"/>
<path d="M937.5,72.6H941.5M960.5,72.6H956.5" stroke="#3a3a3a" stroke-width="1.1"/>
<path d="M940.5,75.4H945Q946.8,75 947.4,73.6M957.5,75.4H953Q951.2,75 950.6,73.6" fill="none" stroke="#2e2e2e" stroke-width="1.2"/>
<rect x="941.6" y="69.4" width="14.6" height="4.3" rx="2.1" fill="#f4f4f4" stroke="#3a3a3a" stroke-width="1.1"/>
<path d="M971.5,60.5H984.5L989.5,65.5V81.5H971.5Z" fill="url(#gpaper)" stroke="#808080" stroke-width="1.1"/><path d="M984.5,60.5V65.5H989.5" fill="#f6f6f6" stroke="#b0b0b0" stroke-width="1"/>
<path d="M974.5,64H982M974.5,66.5H984M974.5,69H980M974.5,71.5H986M974.5,74H986" stroke="#c0c4cc" stroke-width="1"/><path d="M981,68.8H984.5" stroke="#24466e" stroke-width="1.4"/><path d="M975,78H986" stroke="#1e3e66" stroke-width="2"/>
<path d="M987.5,68.5H992.5V78.5H988.5" fill="none" stroke="#a41414" stroke-width="1.4"/><path d="M990.5,76L987,78.5L990.5,81Z" fill="#a41414"/>
<rect x="1005.5" y="61.5" width="16" height="18.5" fill="#f8f8fa" stroke="#808080" stroke-width="1.1"/><rect x="1011" y="66" width="8" height="9" fill="#7a7a7a"/><path d="M1011,77.5H1019" stroke="#28447c" stroke-width="1.8"/>
<path d="M1020,68.5H1026.5V77.5H1024" fill="none" stroke="#384a80" stroke-width="1.3"/><path d="M1025,75L1021.5,77.5L1025,80Z" fill="#384a80"/>
<path d="M1043,60.5H1052.4V80L1047.7,76L1043,80Z" fill="url(#gbook)" stroke="#c86810" stroke-width=".9"/><path d="M1045,61.5V75.5" stroke="#fcd088" stroke-width="1.2"/>
<path d="M1053,61.5L1054.2,64.6L1057.4,64.8L1054.9,66.9L1055.7,70L1053,68.3L1050.3,70L1051.1,66.9L1048.6,64.8L1051.8,64.6Z" fill="#fffad0" stroke="#f4e070" stroke-width="1.2" stroke-opacity=".7"/>
<path d="M1068.5,59V82" stroke="#b6b6b6" stroke-width="1"/><path d="M1069.5,59V82" stroke="#dcdcdc" stroke-width="1"/>
<path d="M1080.5,62.5H1097.5V72L1090,79.5H1080.5Z" fill="url(#gnote)" stroke="#bcac28" stroke-width="1"/><path d="M1090,79.5V72H1097.5Z" fill="#f4ec90" stroke="#b8a828" stroke-width=".9"/><path d="M1091,77.4V73H1095.4Z" fill="#fcf8c8"/>
<path d="M1112.5,59.6H1125.5L1130.5,64.6V80.5H1112.5Z" fill="url(#gpaper)" stroke="#a8a8a8" stroke-width="1"/><path d="M1125.5,59.6V64.6H1130.5" fill="#f6f6f6" stroke="#b4b4b4" stroke-width="1"/>
<path d="M1115,64H1123M1115,69H1121M1115,71.5H1121M1115,76.5H1120" stroke="#c8c8cc" stroke-width="1"/><path d="M1116,66.5H1120M1122,68H1127M1116,74H1122" stroke="#d02828" stroke-width="1.3"/>
<circle cx="1128" cy="76" r="6" fill="#e82020" stroke="#b81010" stroke-width=".8"/><ellipse cx="1127" cy="73.6" rx="3.4" ry="1.8" fill="#f87070" opacity=".7"/>
<path d="M1142.5,59V82" stroke="#b6b6b6" stroke-width="1"/><path d="M1143.5,59V82" stroke="#dcdcdc" stroke-width="1"/>
<path d="M1154,79L1172,61" stroke="#141414" stroke-width="1.15"/>
<path d="M1195,60.5L1206,71L1195,81L1184,71Z" fill="url(#gdia)" stroke="#3a5e98" stroke-width="1.4" stroke-linejoin="round"/>
<path d="M1217.8,69H1224.2L1221,72.4Z" fill="#111"/>
<rect x="1235.6" y="60.4" width="20.8" height="21" rx="2.5" fill="#a2c2ec" stroke="#3e6098" stroke-width="1.3"/>
<rect x="1238.7" y="64.8" width="4.6" height="4.4" fill="#bcd6f4" stroke="#34548a" stroke-width="1"/><circle cx="1250" cy="66.9" r="2.4" fill="#bcd6f4" stroke="#34548a" stroke-width="1"/><circle cx="1241" cy="75.2" r="2.5" fill="#bcd6f4" stroke="#34548a" stroke-width="1"/><path d="M1247.4,73V77.4H1252.8Z" fill="#bcd6f4" stroke="#34548a" stroke-width="1" stroke-linejoin="round"/>
<path d="M0,0H4.5Q1.2,1.2 0,4.5Z" fill="#2c2c2c"/><path d="M1600,0H1595.5Q1598.8,1.2 1600,4.5Z" fill="#6c6c7c"/>
<path d="M1530,15H1538" stroke="#989898" stroke-width="2.1"/><path d="M1530,16.6H1538" stroke="#f0f0f0" stroke-width="1" opacity=".8"/>
<path d="M1554,14H1562M1558,10V18" stroke="#989898" stroke-width="2.1"/>
<path d="M1578.3,9.9L1585.7,17.1M1585.7,9.9L1578.3,17.1" stroke="#8c8c8c" stroke-width="2.1"/>
<path d="M1583.7,33.7L1590.5,40.5M1590.5,33.7L1583.7,40.5" stroke="#2a2a2a" stroke-width="2.1"/>
<circle cx="6" cy="100" r="1.25" fill="#a4a4a4"/><circle cx="6" cy="105.5" r="1.25" fill="#a4a4a4"/><circle cx="6" cy="111" r="1.25" fill="#a4a4a4"/><circle cx="6" cy="116.5" r="1.25" fill="#a4a4a4"/><circle cx="6" cy="122" r="1.25" fill="#a4a4a4"/>
<path d="M141.3,108.5H149.7L145.5,113.2Z" fill="#111"/>
<path d="M355.1,108.5H363.5L359.3,113.2Z" fill="#111"/>
<path d="M417.1,108.5H425.5L421.3,113.2Z" fill="#111"/>
<circle cx="169.7" cy="110.7" r="9.2" fill="url(#gwr)" stroke="#8e8e8e" stroke-width="1"/><path d="M169.2,111.5L174.7,117" stroke="#767676" stroke-width="3.2" stroke-linecap="round"/><circle cx="167.89999999999998" cy="110.3" r="3.4" fill="#767676"/><path d="M167.5,109.9L163.7,106.2" stroke="#ececec" stroke-width="2.4"/>
<path d="M173.5,105A3.6,3.6 0 0 1 180,103.2M181.5,106.5A3.6,3.6 0 0 1 175,108.3" fill="none" stroke="#2a5a92" stroke-width="1.8"/><path d="M178.4,100.6L182.4,103.6L178,105.6Z M176.6,110.8L172.6,107.8L177,105.8Z" fill="#2a5a92"/>
<circle cx="202.5" cy="110.7" r="9.2" fill="url(#gwr)" stroke="#8e8e8e" stroke-width="1"/><path d="M202.0,111.5L207.5,117" stroke="#767676" stroke-width="3.2" stroke-linecap="round"/><circle cx="200.7" cy="110.3" r="3.4" fill="#767676"/><path d="M200.3,109.9L196.5,106.2" stroke="#ececec" stroke-width="2.4"/>
<path d="M210,98.6L211.6,102.3L215.6,102.6L212.5,105.2L213.5,109.1L210,107L206.5,109.1L207.5,105.2L204.4,102.6L208.4,102.3Z" fill="#fbf060" stroke="#e8d030" stroke-width=".7"/><circle cx="210" cy="104.2" r="1.6" fill="#fffde0"/>
<path d="M224.5,98V121.5" stroke="#b6b6b6" stroke-width="1"/><path d="M225.5,98V121.5" stroke="#dcdcdc" stroke-width="1"/>
<path d="M434.5,98V121.5" stroke="#b6b6b6" stroke-width="1"/><path d="M435.5,98V121.5" stroke="#dcdcdc" stroke-width="1"/>
<text x="454.5" y="116.4" font-family="Liberation Sans" font-weight="bold" font-size="26.5" fill="url(#ggray)" text-anchor="middle" textLength="17" lengthAdjust="spacingAndGlyphs" stroke="#4a4a4a" stroke-width=".6">a</text>
<text x="488" y="116" font-family="Liberation Serif" font-style="italic" font-size="30" fill="url(#ggray)" stroke="#585858" stroke-width=".8" text-anchor="middle" textLength="16" lengthAdjust="spacingAndGlyphs">a</text>
<text x="521.5" y="116" font-family="Liberation Sans" font-size="26.5" fill="#808080" text-anchor="middle" textLength="14.5" lengthAdjust="spacingAndGlyphs" stroke="#3e3e3e" stroke-width="1.1">a</text><path d="M514,119.3H529.5" stroke="#4a4a4a" stroke-width="1.4"/>
<text x="554" y="116" font-family="Liberation Sans" font-size="26.5" fill="#808080" text-anchor="middle" textLength="14.5" lengthAdjust="spacingAndGlyphs" stroke="#3e3e3e" stroke-width="1.1">a</text><path d="M544,108.3H564" stroke="#444" stroke-width="1.5"/>
<path d="M574.5,98V121.5" stroke="#b6b6b6" stroke-width="1"/><path d="M575.5,98V121.5" stroke="#dcdcdc" stroke-width="1"/>
<text x="590" y="116" font-family="Liberation Sans" font-size="26.5" fill="#808080" text-anchor="middle" textLength="14.5" lengthAdjust="spacingAndGlyphs" stroke="#3e3e3e" stroke-width="1.1">a</text>
<text x="602" y="112" font-family="Liberation Sans" font-weight="bold" font-size="16.5" fill="#6ea4e4" stroke="#2e66b0" stroke-width=".8" text-anchor="middle" textLength="8.6" lengthAdjust="spacingAndGlyphs">b</text>
<text x="623" y="116" font-family="Liberation Sans" font-size="26.5" fill="#808080" text-anchor="middle" textLength="14.5" lengthAdjust="spacingAndGlyphs" stroke="#3e3e3e" stroke-width="1.1">a</text>
<text x="635" y="121" font-family="Liberation Sans" font-weight="bold" font-size="16.5" fill="#6ea4e4" stroke="#2e66b0" stroke-width=".8" text-anchor="middle" textLength="8.6" lengthAdjust="spacingAndGlyphs">b</text>
<path d="M648.5,98V121.5" stroke="#b6b6b6" stroke-width="1"/><path d="M649.5,98V121.5" stroke="#dcdcdc" stroke-width="1"/>
<text x="669" y="116" font-family="Liberation Serif" font-style="italic" font-size="30" fill="url(#ggray)" stroke="#585858" stroke-width=".8" text-anchor="middle" textLength="16" lengthAdjust="spacingAndGlyphs">a</text>
<path d="M670.5,112L679,120.5M679,112L670.5,120.5" stroke="#e82828" stroke-width="3" stroke-linecap="round"/>
<path d="M689.5,98V121.5" stroke="#b6b6b6" stroke-width="1"/><path d="M690.5,98V121.5" stroke="#dcdcdc" stroke-width="1"/>
<text x="709.3" y="113.4" font-family="Liberation Sans" font-size="26.5" fill="#78aae6" stroke="#2c5ea6" stroke-width="1.2" text-anchor="middle" textLength="15" lengthAdjust="spacingAndGlyphs">a</text>
<rect x="697" y="116" width="24" height="5.5" fill="#8e0000"/>
<path d="M731.8,108H738.2L735,111.4Z" fill="#111"/>
<path d="M752.5,113L752.5,110L755.5,106L760.2,110.2L756,113.3Z" fill="#f4e23c"/>
<path d="M755.5,106L758.6,102.4L763.6,106.6L760.2,110.2Z" fill="#4a4a42"/>
<path d="M758.6,102.4L764,97.4Q766,96.6 768.6,98.6Q770,100.6 769,102L763.6,106.6Z" fill="#f4e23c" stroke="#d8c828" stroke-width=".5"/>
<rect x="747" y="116" width="25" height="6" fill="#ffff00"/>
<path d="M781.8,108H788.2L785,111.4Z" fill="#111"/>
<path d="M797.5,98V121.5" stroke="#b6b6b6" stroke-width="1"/><path d="M798.5,98V121.5" stroke="#dcdcdc" stroke-width="1"/>
<circle cx="808.2" cy="103.6" r="2.1" fill="#b4ccec" stroke="#466fae" stroke-width="1.1"/><circle cx="808.2" cy="113.7" r="2.1" fill="#b4ccec" stroke="#466fae" stroke-width="1.1"/>
<rect x="813" y="101.0" width="15" height="2.6" rx="1.3" fill="url(#gbar)"/><rect x="813" y="106.0" width="7.5" height="2.6" rx="1.3" fill="url(#gbar)"/><rect x="813" y="111.3" width="15" height="2.6" rx="1.3" fill="url(#gbar)"/><rect x="813" y="116.2" width="7.5" height="2.6" rx="1.3" fill="url(#gbar)"/>
<path d="M839.8,108H846.2L843,111.4Z" fill="#111"/>
<text x="858" y="108" font-family="Liberation Serif" font-weight="bold" font-size="10" fill="#34548a" stroke="#34548a" stroke-width=".4" text-anchor="middle">1</text><text x="858" y="119" font-family="Liberation Serif" font-weight="bold" font-size="10" fill="#34548a" stroke="#34548a" stroke-width=".4" text-anchor="middle">2</text>
<rect x="863" y="101.0" width="15" height="2.6" rx="1.3" fill="url(#gbar)"/><rect x="863" y="106.0" width="7.5" height="2.6" rx="1.3" fill="url(#gbar)"/><rect x="863" y="111.3" width="15" height="2.6" rx="1.3" fill="url(#gbar)"/><rect x="863" y="116.2" width="7.5" height="2.6" rx="1.3" fill="url(#gbar)"/>
<path d="M889.3,108H895.7L892.5,111.4Z" fill="#111"/>
<path d="M905.5,98V121.5" stroke="#b6b6b6" stroke-width="1"/><path d="M906.5,98V121.5" stroke="#dcdcdc" stroke-width="1"/>
<rect x="911.5" y="94.5" width="30" height="31" rx="3" fill="url(#gwr)" stroke="#b4b4b4" stroke-width="1"/>
<rect x="916" y="101.0" width="15" height="2.6" rx="1.3" fill="url(#gbar)"/><rect x="916" y="106.10000000000001" width="20" height="2.6" rx="1.3" fill="url(#gbar)"/><rect x="916" y="111.2" width="17" height="2.6" rx="1.3" fill="url(#gbar)"/><rect x="916" y="116.2" width="12" height="2.6" rx="1.3" fill="url(#gbar)"/>
<rect x="952" y="101.0" width="14" height="2.6" rx="1.3" fill="url(#gbar)"/><rect x="949" y="106.10000000000001" width="20" height="2.6" rx="1.3" fill="url(#gbar)"/><rect x="951" y="111.2" width="16" height="2.6" rx="1.3" fill="url(#gbar)"/><rect x="953" y="116.2" width="12" height="2.6" rx="1.3" fill="url(#gbar)"/>
<rect x="987" y="101.0" width="15" height="2.6" rx="1.3" fill="url(#gbar)"/><rect x="982" y="106.10000000000001" width="20" height="2.6" rx="1.3" fill="url(#gbar)"/><rect x="985" y="111.2" width="17" height="2.6" rx="1.3" fill="url(#gbar)"/><rect x="990" y="116.2" width="12" height="2.6" rx="1.3" fill="url(#gbar)"/>
<rect x="1015" y="101.0" width="20" height="2.6" rx="1.3" fill="url(#gbar)"/><rect x="1015" y="106.10000000000001" width="20" height="2.6" rx="1.3" fill="url(#gbar)"/><rect x="1015" y="111.2" width="20" height="2.6" rx="1.3" fill="url(#gbar)"/><rect x="1015" y="116.2" width="20" height="2.6" rx="1.3" fill="url(#gbar)"/>
<path d="M1045.5,98V121.5" stroke="#b6b6b6" stroke-width="1"/><path d="M1046.5,98V121.5" stroke="#dcdcdc" stroke-width="1"/>
<path d="M1056.5,99L1060.2,103.6H1057.9V114.4H1060.2L1056.5,119L1052.8,114.4H1055.1V103.6H1052.8Z" fill="url(#gora)" stroke="#d07818" stroke-width=".8"/>
<rect x="1062" y="102.0" width="14" height="2.6" rx="1.3" fill="url(#gbar)"/><rect x="1062" y="108.4" width="14" height="2.6" rx="1.3" fill="url(#gbar)"/><rect x="1062" y="114.7" width="14" height="2.6" rx="1.3" fill="url(#gbar)"/>
<path d="M1087.3,108H1093.7L1090.5,111.4Z" fill="#111"/>
<rect x="1106" y="101.0" width="20" height="2.6" rx="1.3" fill="url(#gbar)"/><rect x="1113" y="105.3" width="9" height="2.6" rx="1.3" fill="url(#gbar)"/><rect x="1113" y="112.10000000000001" width="13" height="2.6" rx="1.3" fill="url(#gbar)"/><rect x="1106" y="116.2" width="12" height="2.6" rx="1.3" fill="url(#gbar)"/>
<path d="M1109,105L1112,108.6H1106Z M1109,115.2L1112,111.6H1106Z" fill="#f8c078" stroke="#e08828" stroke-width=".8"/>
<rect x="1139" y="101.5" width="19" height="2.6" rx="1.3" fill="#c2c2c2"/><rect x="1147" y="105.7" width="7" height="2.6" rx="1.3" fill="#c2c2c2"/><rect x="1147" y="111.7" width="11" height="2.6" rx="1.3" fill="#c2c2c2"/><rect x="1139" y="115.7" width="11" height="2.6" rx="1.3" fill="#c2c2c2"/>
<path d="M1142,106.2L1144.6,109H1139.4Z M1142,114L1144.6,111.2H1139.4Z" fill="#d0d0d0"/>
<path d="M1169.5,98V121.5" stroke="#b6b6b6" stroke-width="1"/><path d="M1170.5,98V121.5" stroke="#dcdcdc" stroke-width="1"/>
<rect x="1179" y="101.0" width="22" height="2.6" rx="1.3" fill="url(#gbar)"/><rect x="1187" y="106.10000000000001" width="14" height="2.6" rx="1.3" fill="url(#gbar)"/><rect x="1187" y="111.2" width="14" height="2.6" rx="1.3" fill="url(#gbar)"/><rect x="1179" y="116.2" width="22" height="2.6" rx="1.3" fill="url(#gbar)"/>
<path d="M1179.8,106.2L1183.6,110L1179.8,113.8" fill="none" stroke="#e88820" stroke-width="2" stroke-linejoin="round"/>
<rect x="1212" y="101.0" width="22" height="2.6" rx="1.3" fill="url(#gbar)"/><rect x="1220" y="106.10000000000001" width="14" height="2.6" rx="1.3" fill="url(#gbar)"/><rect x="1220" y="111.2" width="14" height="2.6" rx="1.3" fill="url(#gbar)"/><rect x="1212" y="116.2" width="22" height="2.6" rx="1.3" fill="url(#gbar)"/>
<path d="M1216.6,106.2L1212.8,110L1216.6,113.8" fill="none" stroke="#e88820" stroke-width="2" stroke-linejoin="round"/>
<circle cx="1312" cy="178" r="7.2" fill="#e4eefa" stroke="#8c8c8c" stroke-width="1"/>
<path d="M1308,175H1316M1308,178H1316M1308,181H1316" stroke="#244e8c" stroke-width="1.7"/>
<circle cx="1337" cy="178" r="7.2" fill="#e4eefa" stroke="#8c8c8c" stroke-width="1"/>
<text x="1337" y="182" font-family="Liberation Sans" font-weight="bold" font-size="12.5" fill="#244e8c" stroke="#244e8c" stroke-width=".4" text-anchor="middle" textLength="7.6" lengthAdjust="spacingAndGlyphs">a</text>
<circle cx="1362" cy="178" r="7.2" fill="#f2f2f2" stroke="#8c8c8c" stroke-width="1"/>
<rect x="1358" y="175" width="8" height="6" fill="none" stroke="#3a3a3a" stroke-width="1.7"/>
<circle cx="1387" cy="178" r="7.2" fill="#f2f2f2" stroke="#8c8c8c" stroke-width="1"/>
<path d="M1384,174H1388L1390.5,176.5V182H1384Z" fill="none" stroke="#3a3a3a" stroke-width="1.6"/>
<circle cx="1412" cy="178" r="7.2" fill="#e4eefa" stroke="#8c8c8c" stroke-width="1"/>
<path d="M1411,175H1416M1411,178H1416M1411,181H1416" stroke="#244e8c" stroke-width="1.7"/><path d="M1408,175H1409.6M1408,178H1409.6M1408,181H1409.6" stroke="#244e8c" stroke-width="1.7"/>
<path d="M1494.9,176Q1493.6,170.4 1497.2,170.2Q1500.4,170.6 1499.6,176.4" fill="none" stroke="#3e3e3e" stroke-width="1.1"/>
<path d="M1496.7,174.2L1503.8,177.2L1500,185.5L1492.1,180.4Z" fill="#f6f6f6" stroke="#3a3a3a" stroke-width="1.15" stroke-linejoin="round"/><circle cx="1498.4" cy="177.6" r="1.3" fill="#555"/>
<path d="M1503.6,176.6Q1505.4,175.4 1506.8,176.2" fill="none" stroke="#3e3e3e" stroke-width="1"/><ellipse cx="1506.4" cy="179.3" rx="1.3" ry="3.2" fill="#c8d8ea" stroke="#4a6c96" stroke-width="1.1"/>
<path d="M1519.6,173.2H1522.6V174.2H1522.2V182H1521V174.2H1520.2V182H1519V178Q1517,178 1517,175.6Q1517,173.2 1519.6,173.2Z" fill="#1e1e1e" stroke="#1e1e1e" stroke-width=".5"/>
<path d="M1525,173.7H1530.8M1525,175.7H1530.8M1525,177.7H1530.8M1525,179.7H1530.8M1525,181.7H1530.8" stroke="#343434" stroke-width="1.1"/>
<g transform="translate(1579 189.4) scale(.86) translate(-1579.3 -189.7)">
<path d="M1574.6,185.4L1584.6,194.4" stroke="#8a8a8a" stroke-width="5" stroke-linecap="butt"/>
<path d="M1567.6,181.8Q1567.4,178.6 1570.4,177.6L1572.2,181L1574.6,180.2L1574,176.8Q1577.4,177.6 1577.8,181Q1578,183 1576.6,184.6L1573.4,187.6Q1569.2,187 1567.6,181.8Z" fill="#f6f6f6" stroke="#8a8a8a" stroke-width="1"/>
<path d="M1591,197.6Q1591.2,200.8 1588.2,201.8L1586.4,198.4L1584,199.2L1584.6,202.6Q1581.2,201.8 1580.8,198.4Q1580.6,196.4 1582,194.8L1585.2,191.8Q1589.4,192.4 1591,197.6Z" fill="#f6f6f6" stroke="#8a8a8a" stroke-width="1"/>
<path d="M1574.8,185.6L1584.4,194.2" stroke="#f6f6f6" stroke-width="3"/>
</g>
<path d="M1570.5,213.5H1588V218H1586.6Q1586,216 1584,216H1581.8V230H1576.8V216H1574.5Q1572.5,216 1571.9,218H1570.5Z" fill="#363636"/>
<path d="M1567.5,219.5V236.5H1589Z" fill="#6cc04a" stroke="#3c8c24" stroke-width="1"/><path d="M1570.5,227.5V233.5H1578Z" fill="#a8e088" stroke="#3c8c24" stroke-width=".7"/>
<path d="M1574,253L1579,248.5L1584,253" fill="none" stroke="#6a6a6a" stroke-width="1"/><rect x="1568.5" y="252.5" width="21" height="14" rx="1.5" fill="#f0a020" stroke="#b87010" stroke-width="1"/><rect x="1570.5" y="254.5" width="17" height="10" fill="url(#gimg)"/><rect x="1570.5" y="254.5" width="17" height="10" fill="url(#gsun)"/><path d="M1579,264.5V260L1576.5,257M1579,260L1582,256.5" stroke="#2a1a08" stroke-width="1" fill="none"/>
<circle cx="1579" cy="294" r="10.5" fill="#f2f2f2" stroke="#9c9c9c" stroke-width="1.6"/><circle cx="1579" cy="294" r="8" fill="#fafafa" stroke="#c8c8c8" stroke-width=".8"/>
<path d="M1574.5,288.5L1580.4,292.6L1577.6,295.4Z" fill="#d83040"/><path d="M1583.5,299.5L1577.6,295.4L1580.4,292.6Z" fill="#4a6aa8"/>
<path d="M1306.2,209H1316.8L1311.5,214Z" fill="#1a1a1a"/>
<path d="M1321,270L1326,275L1321,280Z" fill="#1a1a1a"/>
<path d="M1321,622L1326,627L1321,632Z" fill="#1a1a1a"/>
<path d="M1321,686L1326,691L1321,696Z" fill="#1a1a1a"/>
<path d="M1545.4,143.6L1552.8,150.6M1552.8,143.6L1545.4,150.6" stroke="#2e2e2e" stroke-width="2.1" fill="none"/>
<path d="M1575,146.6H1580.8M1575,148.5H1580.8M1575,150.4H1580.8" stroke="#262626" stroke-width="1.1"/><path d="M1578.8,152.3H1584.4L1581.6,155.2Z" fill="#111"/>
<path d="M1535,825.5H1545L1540,830.5Z" fill="#1a1a1a"/>
<path d="M1542.8,176.2H1548.6L1545.7,179.2Z" fill="#111"/>
<rect x="1072.2" y="858.2" width="8.6" height="5.5" fill="#7c7c7c"/><path d="M1082.5,856.5V865.6M1081.2,856.5H1083.8M1081.2,865.6H1083.8" stroke="#6a6a6a" stroke-width="1" fill="none"/>
<path d="M1103.6,854.6H1111.4V864.4H1103.6Z" fill="#dcdcdc" stroke="#7e7e7e" stroke-width="1.1"/><path d="M1106.4,859.4L1108.4,861.4L1112.4,856.8" stroke="#a4a4a4" stroke-width="1.3" fill="none"/>
<path d="M1341.5,856.5H1345.5L1348.5,859.5V865.5H1341.5Z" fill="none" stroke="#3c3c3c" stroke-width="1"/><path d="M1345.5,856.5V859.5H1348.5" fill="none" stroke="#3c3c3c" stroke-width="1"/>
<path d="M1355.5,856.5H1359.5L1362.5,859.5V865.5H1355.5Z" fill="none" stroke="#8a8a8a" stroke-width="1"/><path d="M1359.5,856.5V859.5H1362.5" fill="none" stroke="#8a8a8a" stroke-width="1"/>
<path d="M1365.5,856.5H1369.5L1372.5,859.5V865.5H1365.5Z" fill="none" stroke="#8a8a8a" stroke-width="1"/><path d="M1369.5,856.5V859.5H1372.5" fill="none" stroke="#8a8a8a" stroke-width="1"/>
<path d="M1381.5,856.5H1387.5V865.5H1379.5V858.5Z M1387.5,856.5H1395.5V865.5H1387.5" fill="none" stroke="#8a8a8a" stroke-width="1"/>
<path d="M1416,861H1424" stroke="#666" stroke-width="2"/>
<path d="M1430,861H1528" stroke="#929292" stroke-width="1.8"/>
<path d="M1456.5,856V866" stroke="#868686" stroke-width="1.8"/>
<circle cx="1478" cy="861" r="3.8" fill="#fff" stroke="#7a7a7a" stroke-width="1"/>
<path d="M1534,861H1542M1538,857V865" stroke="#666" stroke-width="2"/>
</svg>
</div>
</body></html>
